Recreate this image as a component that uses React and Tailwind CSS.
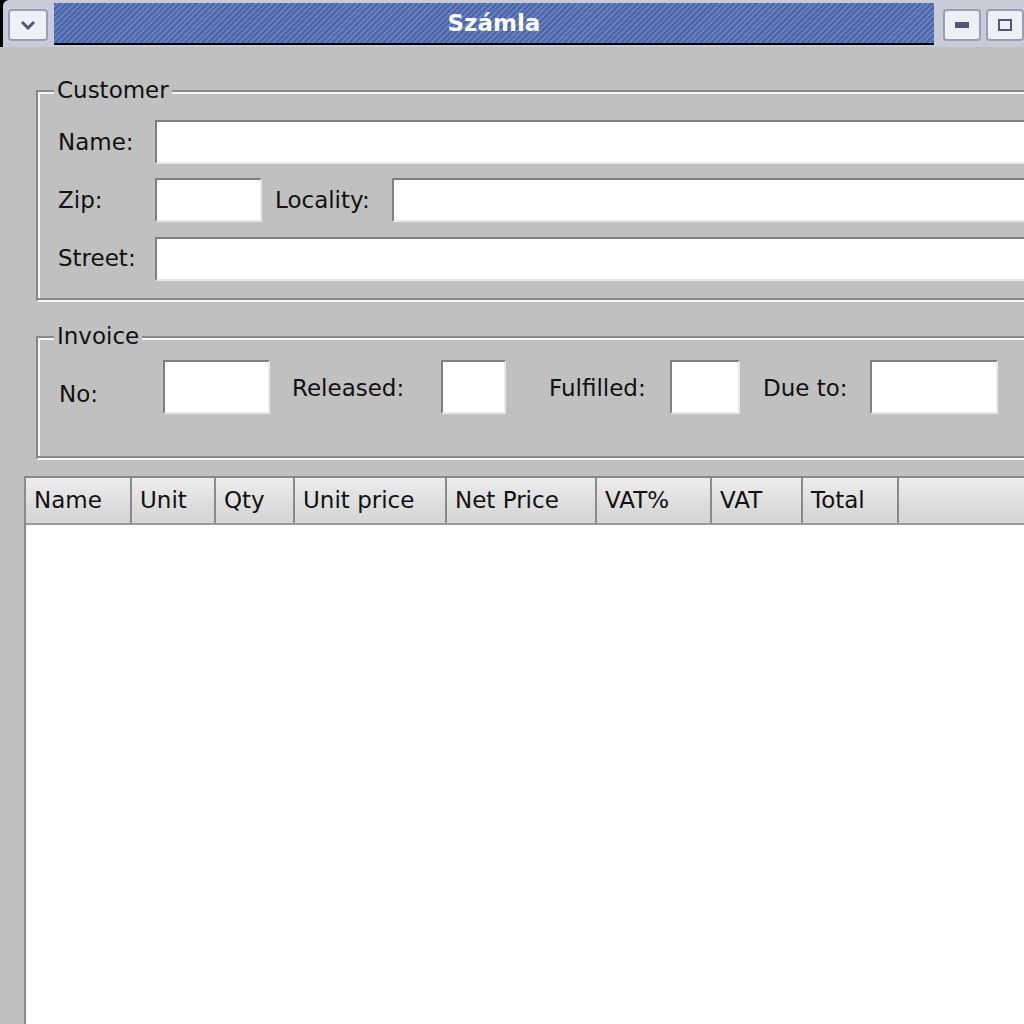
const Input = ({ w, h = "h-[44px]" }) => (
  <div className={`${w} ${h} shrink-0 bg-white border-2 border-t-[#808080] border-l-[#808080] border-b-[#e8e8e8] border-r-[#e8e8e8]`} />
);

const Group = ({ title, className, children }) => (
  <div className={`relative ml-[36px] w-[1100px] border-2 border-t-[#8a8a8a] border-l-[#8a8a8a] border-b-[#f4f4f4] border-r-[#f4f4f4] shadow-[inset_-2px_-2px_0_#8a8a8a,inset_2px_2px_0_#f4f4f4] ${className}`}>
    <span className="absolute -top-[16px] left-[16px] bg-[#c0c0c0] px-[3px] leading-[28px]">{title}</span>
    {children}
  </div>
);

const cols = [
  ["Name", 106], ["Unit", 84], ["Qty", 79], ["Unit price", 152], ["Net Price", 150],
  ["VAT%", 115], ["VAT", 91], ["Total", 96],
];

export default function App() {
  return (
    <div className="w-[1024px] h-[1024px] overflow-hidden bg-black text-[23px] text-[#111]" style={{ fontFamily: '"DejaVu Sans", sans-serif' }}>
      <div className="flex h-[47px] items-stretch bg-[#c8cbd8] pt-[3px] ml-[3px] rounded-tl-[6px]">
        <div className="w-[52px] flex items-center justify-center">
          <div className="w-[40px] h-[32px] rounded-[4px] border-2 border-[#9aa0b4] bg-[#eef0f6] flex items-center justify-center">
            <svg width="16" height="10" viewBox="0 0 16 10"><path d="M2 2 L8 8 L14 2" stroke="#505a78" strokeWidth="3" fill="none" /></svg>
          </div>
        </div>
        <div className="w-[898px] h-[42px] flex items-center justify-center bg-[repeating-linear-gradient(135deg,#4a64a8_0px,#4a64a8_2px,#6880c0_2px,#6880c0_4px)] border-b-2 border-black">
          <span className="text-white font-bold text-[23px]">Számla</span>
        </div>
        <div className="flex gap-[5px] pl-[9px] items-center">
          <div className="w-[38px] h-[32px] rounded-[4px] border-2 border-[#9aa0b4] bg-[#eef0f6] flex items-center justify-center">
            <div className="w-[14px] h-[6px] bg-[#505a78]" />
          </div>
          <div className="w-[38px] h-[32px] rounded-[4px] border-2 border-[#9aa0b4] bg-[#eef0f6] flex items-center justify-center">
            <div className="w-[14px] h-[12px] border-2 border-[#505a78]" />
          </div>
        </div>
      </div>
      <div className="flex h-[977px]">
        <div className="w-[3px] bg-black" />
        <div className="w-[7px] bg-[#d8d8d8]" />
        <div className="w-[2px] bg-[#8a8a8a]" />
        <div className="flex-1 bg-[#c0c0c0] pt-[43px] flex flex-col">
          <Group title="Customer" className="ml-[24px] h-[212px] pt-[28px]">
            <div className="flex items-center h-[44px]">
              <span className="w-[117px] pl-[20px]">Name:</span>
              <Input w="w-[900px]" />
            </div>
            <div className="flex items-center h-[44px] mt-[14px]">
              <span className="w-[117px] pl-[20px]">Zip:</span>
              <Input w="w-[107px]" />
              <span className="w-[130px] pl-[13px]">Locality:</span>
              <Input w="w-[700px]" />
            </div>
            <div className="flex items-center h-[45px] mt-[14px]">
              <span className="w-[117px] pl-[20px]">Street:</span>
              <Input w="w-[900px]" />
            </div>
          </Group>
          <Group title="Invoice" className="ml-[24px] mt-[34px] h-[124px] pt-[22px]">
            <div className="flex items-start h-[54px]">
              <span className="w-[125px] pl-[21px] mt-[17px]">No:</span>
              <Input w="w-[107px]" h="h-[54px]" />
              <span className="w-[171px] pl-[22px] mt-[11px]">Released:</span>
              <Input w="w-[65px]" h="h-[54px]" />
              <span className="w-[164px] pl-[43px] mt-[11px]">Fulfilled:</span>
              <Input w="w-[70px]" h="h-[54px]" />
              <span className="w-[130px] pl-[23px] mt-[11px]">Due to:</span>
              <Input w="w-[128px]" h="h-[54px]" />
            </div>
          </Group>
          <div className="ml-[24px] mt-[16px] flex-1 border-l-2 border-t-2 border-[#8a8a8a] bg-white flex flex-col">
            <div className="flex h-[47px] bg-[linear-gradient(#ececec,#d4d4d4)] border-b-2 border-[#9a9a9a]">
              {cols.map(([t, w]) => (
                <div key={t} style={{ width: w }} className="shrink-0 border-r-2 border-[#8a8a8a] flex items-center pl-[8px]">{t}</div>
              ))}
              <div className="flex-1" />
            </div>
          </div>
        </div>
      </div>
    </div>
  );
}
